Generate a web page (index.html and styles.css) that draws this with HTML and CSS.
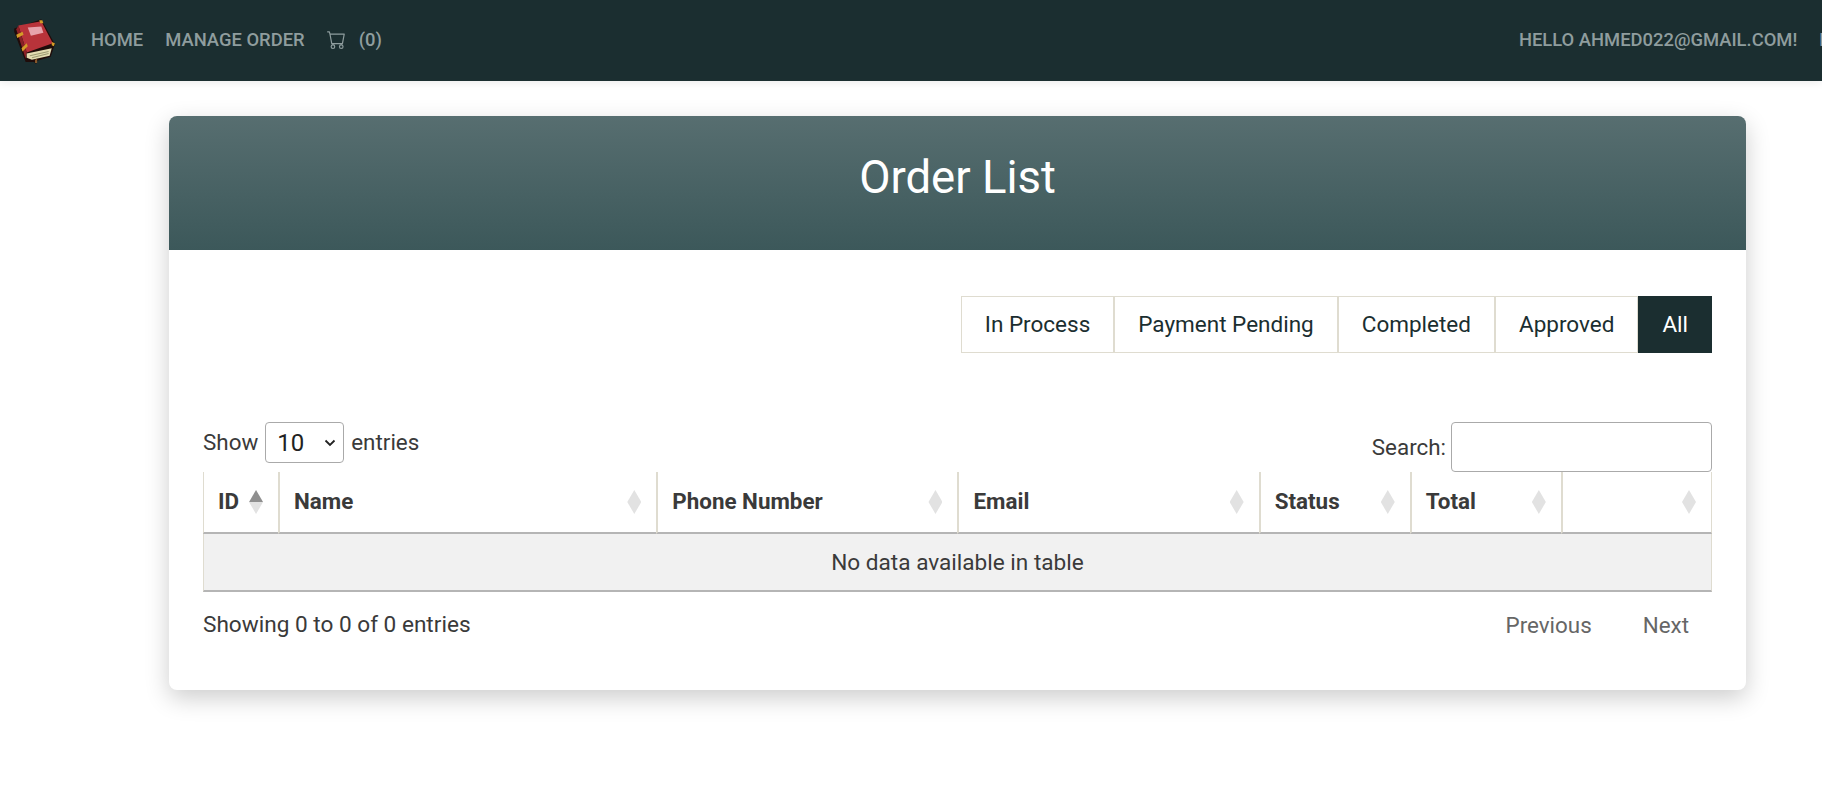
FILE: index.html
```html
<!DOCTYPE html>
<html lang="en">

<head>
    <meta charset="UTF-8">
    <title>Order List</title>
    <link rel="stylesheet" href="styles.css">
</head>

<body>

    <nav class="navbar">
        <svg class="logo" viewBox="0 0 44 46" width="46" height="48">
            <path d="M3 12 L29 3 L42 27 L40 33 L38 39 L25 43 L24 46 L22 44 L14 44 L3 15 Z" fill="#1f0c0a" />
            <path d="M7 9 L29 5 L40 26 L15 35 Z" fill="#b8333a" />
            <path d="M5 13 L7 9 L15 35 L14 41 Z" fill="#8a2026" />
            <path d="M15 36 L39 31 L37 38 L20 42 L15 40 Z" fill="#e3dcb2" />
            <path d="M18 38 L36 34 M20 40 L36 36" stroke="#9c9a72" stroke-width="1" fill="none" />
            <path d="M16 11 L29 10 L31 16 L19 19 Z" fill="#e7a3ab" />
            <path d="M5 18 L11 15 L12 18 L6 21 Z M10 31 L15 26 L16 29 L11 34 Z" fill="#d39c28" />
            <path d="M27 4 L30 4 L31 7 L28 7 Z M39 25 L42 26 L41 29 L39 28 Z" fill="#d39c28" />
            <path d="M23 42 L25 41 L25 45 L23 45 Z" fill="#8a5a2c" />
        </svg>
        <a class="nav-link" href="#">Home</a>
        <a class="nav-link" href="#">Manage Order</a>
        <a class="nav-link cart-link" href="#">
            <svg viewBox="0 0 16 16" width="19" height="19" fill="currentColor">
                <path d="M0 1.5A.5.5 0 0 1 .5 1H2a.5.5 0 0 1 .485.379L2.89 3H14.5a.5.5 0 0 1 .491.592l-1.5 8A.5.5 0 0 1 13 12H4a.5.5 0 0 1-.491-.408L2.01 3.607 1.61 2H.5a.5.5 0 0 1-.5-.5zM3.102 4l1.313 7h8.17l1.313-7H3.102zM5 12a2 2 0 1 0 0 4 2 2 0 0 0 0-4zm7 0a2 2 0 1 0 0 4 2 2 0 0 0 0-4zm-7 1a1 1 0 1 1 0 2 1 1 0 0 1 0-2zm7 0a1 1 0 1 1 0 2 1 1 0 0 1 0-2z" />
            </svg>
            <span>(0)</span>
        </a>
        <span class="nav-spacer"></span>
        <a class="nav-link" href="#">Hello ahmed022@gmail.com!</a>
        <a class="nav-link" href="#">Logout</a>
    </nav>

    <main class="page">
        <section class="card">
            <h1 class="card-header">Order List</h1>

            <div class="card-body">
                <div class="status-filter">
                    <a class="status-btn" href="#">In Process</a>
                    <a class="status-btn" href="#">Payment Pending</a>
                    <a class="status-btn" href="#">Completed</a>
                    <a class="status-btn" href="#">Approved</a>
                    <a class="status-btn active" href="#">All</a>
                </div>

                <div class="table-top">
                    <label class="length-label">Show
                        <select class="length-select">
                            <option>10</option>
                            <option>25</option>
                            <option>50</option>
                        </select>
                        entries</label>
                    <label class="search-label">Search:
                        <input class="search-input" type="search">
                    </label>
                </div>

                <table class="order-table">
                    <colgroup>
                        <col class="col-id">
                        <col class="col-name">
                        <col class="col-wide">
                        <col class="col-wide">
                        <col class="col-narrow">
                        <col class="col-narrow">
                        <col class="col-narrow">
                    </colgroup>
                    <thead>
                        <tr>
                            <th class="sort-asc">ID</th>
                            <th>Name</th>
                            <th>Phone Number</th>
                            <th>Email</th>
                            <th>Status</th>
                            <th>Total</th>
                            <th></th>
                        </tr>
                    </thead>
                    <tbody>
                        <tr>
                            <td colspan="7">No data available in table</td>
                        </tr>
                    </tbody>
                </table>

                <div class="table-bottom">
                    <div>Showing 0 to 0 of 0 entries</div>
                    <div class="pager">
                        <a href="#">Previous</a>
                        <a href="#">Next</a>
                    </div>
                </div>
            </div>
        </section>
    </main>

</body>

</html>
```

FILE: styles.css
```css
* {
    box-sizing: border-box;
}

html,
body {
    height: 808px;
    overflow: hidden;
}

body {
    margin: 0;
    background: white;
    color: #3a3a3a;
    font-family: Roboto, sans-serif;
    font-size: 22.4px;
}

a {
    text-decoration: none;
}

.navbar {
    display: flex;
    align-items: center;
    gap: 22px;
    height: 81px;
    padding: 0 0 2px 11px;
    background: #1b2e30;
    box-shadow: 0 2px 8px rgba(0, 0, 0, 0.08);
    white-space: nowrap;
    overflow: hidden;
}

.logo {
    flex-shrink: 0;
    margin-right: 12px;
}

.nav-link {
    display: flex;
    align-items: center;
    gap: 15px;
    flex-shrink: 0;
    color: #8f9d9e;
    font-size: 18.4px;
    font-weight: 500;
    text-transform: uppercase;
}

.cart-link {
    gap: 13px;
}

.nav-spacer {
    flex: 0 0 1093px;
}

.page {
    padding: 35px 76px 0 169px;
}

.card {
    border-radius: 8px;
    background: white;
    box-shadow: 0 8px 24px rgba(0, 0, 0, 0.2);
    overflow: hidden;
}

.card-header {
    margin: 0;
    height: 134px;
    line-height: 124px;
    background: linear-gradient(#576e70, #3c585a);
    color: white;
    font-size: 45.5px;
    font-weight: 400;
    text-align: center;
}

.card-body {
    padding: 46px 34px 0;
    height: 440px;
}

.status-filter {
    display: flex;
    justify-content: flex-end;
}

.status-btn {
    display: flex;
    align-items: center;
    height: 57px;
    padding: 0 23px 2px;
    border: 1px solid #dfdcd0;
    color: #1b2e30;
    font-size: 22.5px;
}

.status-btn.active {
    border-color: #1b2e30;
    background: #1b2e30;
    color: white;
}

.table-top {
    display: flex;
    justify-content: space-between;
    align-items: flex-start;
    margin-top: 69px;
}

.length-label {
    display: flex;
    align-items: center;
    gap: 7px;
    height: 41px;
    padding-bottom: 2px;
}

.length-select {
    appearance: none;
    width: 79px;
    height: 41px;
    margin-top: 2px;
    padding: 0 0 0 11px;
    border: 1px solid #aaa;
    border-radius: 4px;
    background: white url("data:image/svg+xml,%3Csvg xmlns='http://www.w3.org/2000/svg' viewBox='0 0 12 8'%3E%3Cpath d='M1.5 1.5 6 6l4.5-4.5' fill='none' stroke='%23222' stroke-width='1.8'/%3E%3C/svg%3E") no-repeat right 7px center / 12px 8px;
    color: #222;
    font-family: Roboto, sans-serif;
    font-size: 24px;
}

.search-label {
    display: flex;
    align-items: center;
    gap: 5px;
}

.search-input {
    width: 261px;
    height: 50px;
    border: 1px solid #aaa;
    border-radius: 4px;
}

.order-table {
    width: 100%;
    border-collapse: separate;
    border-spacing: 0;
    table-layout: fixed;
}

.col-id {
    width: 75px;
}

.col-name {
    width: 378px;
}

.col-wide {
    width: 301px;
}

.col-narrow {
    width: 151px;
}

.order-table th {
    position: relative;
    height: 62px;
    padding: 0 14px 2px;
    border-left: 2px solid #dfdcd0;
    border-bottom: 2px solid #b5b5b5;
    font-weight: 700;
    text-align: left;
}

.order-table th:first-child {
    border-left-width: 1px;
}

.order-table th:last-child {
    border-right: 1px solid #dfdcd0;
}

/* sort arrows, drawn as one diamond */
.order-table th::before,
.order-table th::after {
    content: "";
    position: absolute;
    right: 15px;
    width: 14px;
    height: 12px;
    background: #e2e2e2;
}

.order-table th::before {
    top: 18px;
    clip-path: polygon(50% 0, 100% 100%, 0 100%);
}

.order-table th::after {
    top: 30px;
    clip-path: polygon(0 0, 100% 0, 50% 100%);
}

.order-table th.sort-asc::before {
    background: #8f8f8f;
}

.order-table td {
    height: 58px;
    border-left: 1px solid #dfdcd0;
    border-right: 1px solid #dfdcd0;
    border-bottom: 2px solid #b5b5b5;
    background: #f1f1f1;
    font-size: 22.6px;
    text-align: center;
}

.table-bottom {
    display: flex;
    justify-content: space-between;
    align-items: center;
    margin-top: 19px;
    font-size: 22.6px;
}

.pager {
    display: flex;
    gap: 51px;
    padding: 1px 23px 0 0;
    font-size: 22.4px;
}

.pager a {
    color: #666;
}
```
